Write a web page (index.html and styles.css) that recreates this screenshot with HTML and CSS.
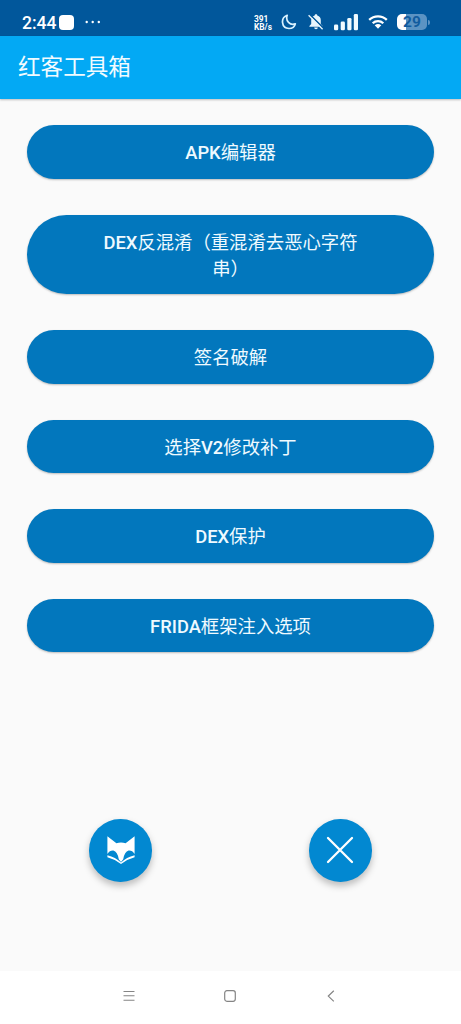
FILE: index.html
```html
<!DOCTYPE html>
<html lang="zh-CN">
<head>
<meta charset="utf-8">
<title>红客工具箱</title>
<link rel="stylesheet" href="styles.css">
</head>
<body>
<div class="screen">
  <header class="status">
    <span class="time">2:44</span>
    <span class="notice"></span>
    <svg class="dots" width="16" height="4" viewBox="0 0 16 4" fill="#fff"><circle cx="1.7" cy="2" r="1.2"/><circle cx="7.7" cy="2" r="1.2"/><circle cx="13.8" cy="2" r="1.2"/></svg>
    <span class="speed">391<br>KB/s</span>
    <svg class="moon" width="16" height="16" viewBox="0 0 16 16" fill="none" stroke="#d9f2ff" stroke-width="1.700" stroke-linejoin="round"><path d="M6.200 1.300C-.8 3.800 .2 14.200 8 14.500 11.300 14.500 13.700 12.600 14.300 9.900 9 11.800 4.200 7 6.200 1.300Z"/></svg>
    <svg class="bell" width="18" height="18" viewBox="0 0 18 18"><path fill="#e8f5fc" d="M9 1.200c.8 0 1.300.5 1.300 1.200 2.300.6 3.500 2.400 3.500 4.800v3.700l1.800 2v.9H2.400v-.9l1.800-2V7.200c0-2.400 1.200-4.200 3.500-4.800C7.700 1.700 8.200 1.200 9 1.200ZM7.200 14.600h3.600c0 1-.8 1.700-1.800 1.700s-1.800-.7-1.800-1.700Z"/><path d="M2.500 1.200 16.700 15.400" stroke="#01579b" stroke-width="1.600"/><path d="M1.600 2.200 15.600 16.200" stroke="#e8f5fc" stroke-width="1.300"/></svg>
    <svg class="signal" width="25" height="18" viewBox="0 0 25 18" fill="#f0faff"><rect x="0" y="11.500" width="4.200" height="5.800" rx="1.300"/><rect x="6.700" y="8.500" width="4.200" height="8.800" rx="1.300"/><rect x="13.300" y="5" width="4.200" height="12.300" rx="1.300"/><rect x="19.800" y="1" width="4.200" height="16.300" rx="1.300"/></svg>
    <svg class="wifi" width="20" height="16" viewBox="0 0 20 16" fill="none" stroke="#fff" stroke-width="2.300"><path d="M1.200 5.900A12.500 12.500 0 0 1 18.800 5.900"/><path d="M4.700 9.300A7.600 7.600 0 0 1 15.300 9.300"/><path fill="#fff" stroke="none" d="M6.700 11.300Q10 8.600 13.300 11.300L10 14.700Z"/></svg>
    <span class="battery"><span class="level">29</span></span><span class="tip"></span>
  </header>
  <div class="appbar">红客工具箱</div>
  <main class="content">
    <nav class="tools">
      <button class="tool"><span class="label"><b>APK</b>编辑器</span></button>
      <button class="tool tall"><span class="label"><b>DEX</b>反混淆（重混淆去恶心字符串）</span></button>
      <button class="tool"><span class="label">签名破解</span></button>
      <button class="tool"><span class="label">选择<b>V2</b>修改补丁</span></button>
      <button class="tool"><span class="label"><b>DEX</b>保护</span></button>
      <button class="tool"><span class="label"><b>FRIDA</b>框架注入选项</span></button>
    </nav>
    <div class="fabs">
      <button class="fab" aria-label="fox">
        <svg width="28" height="28" viewBox="0 0 28 28" fill="#fff"><path d="M.4.300 9.400 7.200Q14 5.800 18.600 7.200L27.600.300V18Q25.300 14.300 21.600 14.600 17.600 15.800 16.200 23.200L14 25.900 11.800 23.200Q10.400 15.800 6.400 14.600 2.700 14.300.4 18Z"/><path d="M.4 19.200Q8.500 21.200 14 26.600 19.500 21.200 27.600 19.200V21.300Q20 23.300 14 28 8 23.300.4 21.300Z"/></svg>
      </button>
      <button class="fab" aria-label="close">
        <svg width="28" height="28" viewBox="0 0 28 28" stroke="#fff" stroke-width="2.300" stroke-linecap="round"><path d="M2 2 26 26M26 2 2 26"/></svg>
      </button>
    </div>
  </main>
  <footer class="navbar">
    <svg width="14" height="14" viewBox="0 0 14 14" stroke="#858585" stroke-width="1.100"><path d="M1.500 2.500h11M1.500 6.800h11M1.500 11.200h11"/></svg>
    <svg width="14" height="14" viewBox="0 0 14 14" fill="none" stroke="#858585" stroke-width="1.200"><rect x="1.700" y="1.700" width="10.600" height="10.600" rx="2.200"/></svg>
    <svg width="14" height="14" viewBox="0 0 14 14" fill="none" stroke="#858585" stroke-width="1.200"><path d="M9.800 1.800 4.300 7.100 9.800 12.400"/></svg>
  </footer>
</div>
</body>
</html>
```

FILE: styles.css
```css
* { box-sizing: border-box; }
body { margin: 0; font-family: Roboto, "Noto Sans CJK SC", sans-serif; }
button { border: 0; padding: 0; font: inherit; color: inherit; }
svg { display: block; flex: none; }
.screen { width: 461px; height: 1024px; display: flex; flex-direction: column; background: #fafafa; overflow: hidden; }

.status { height: 36px; flex: none; background: #01579b; color: #fff; display: flex; align-items: center; padding: 8px 0 0 22px; }
.time { width: 37px; padding-top: 2px; font-size: 17.500px; font-weight: 500; line-height: 26px; }
.notice { width: 15px; height: 15px; border-radius: 4px; background: #fff; }
.dots { margin-left: 11px; }
.speed { width: 28px; margin-left: 153px; font-size: 8.300px; font-weight: 700; line-height: 8px; padding-top: 2px; white-space: nowrap; }
.moon { margin-left: -1px; }
.bell { margin-left: 10px; }
.signal { margin-left: 9px; }
.wifi { margin-left: 9px; }
.battery { width: 30px; height: 16px; margin-left: 9px; border-radius: 5px; background: linear-gradient(90deg, #fff 29%, #5b93c3 29%); color: #115c9f; font-size: 15.500px; font-weight: 700; line-height: 17px; text-align: center; }
.tip { width: 2px; height: 5px; margin-left: 1px; border-radius: 0 2px 2px 0; background: #5b93c3; }

.appbar { height: 62.500px; flex: none; padding-left: 18px; background: #03a9f4; color: #f1fbff; font-size: 22.600px; line-height: 64px; box-shadow: 0 1px 2px rgba(0, 0, 0, .25); }

.content { flex: 1; display: flex; flex-direction: column; justify-content: space-between; padding: 26.800px 26.800px 89.500px; }
.tools { display: flex; flex-direction: column; gap: 35.900px; }
.tool { min-height: 53.700px; padding: 15px 0 12.500px; border-radius: 40px; background: #0277bd; color: #effaff; box-shadow: 0 1px 2px rgba(0, 0, 0, .25); display: flex; align-items: center; justify-content: center; }
.tall { padding: 15.500px 0 11.800px; }
.label { max-width: 262px; font-size: 18.350px; line-height: 26px; text-align: center; }
.label b { font-weight: 500; }

.fabs { display: flex; justify-content: space-between; padding: 0 62.700px; }
.fab { width: 62.500px; height: 62.500px; border-radius: 50%; background: #0288d1; display: grid; place-items: center; box-shadow: 0 4px 7px rgba(0, 0, 0, .25); }

.navbar { height: 53px; flex: none; background: #fff; display: flex; justify-content: space-between; padding: 18px 123.500px 0 122px; }
```
